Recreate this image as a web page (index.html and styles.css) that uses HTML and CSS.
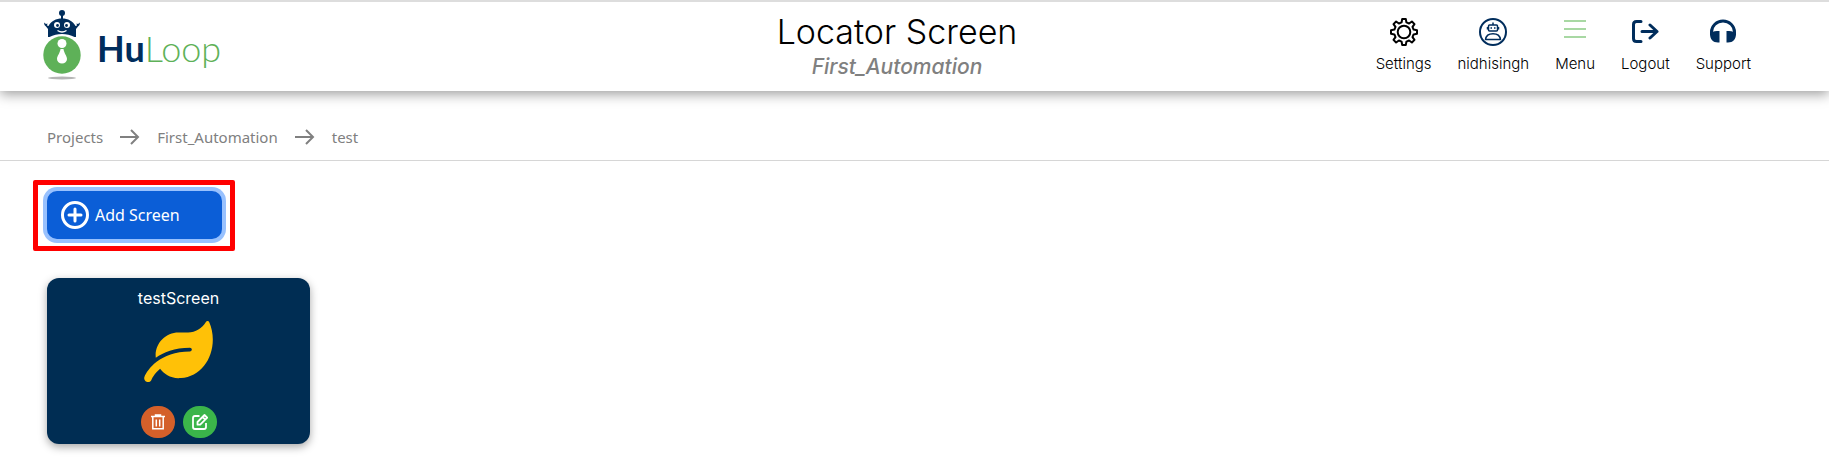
FILE: index.html
```html
<!DOCTYPE html>
<html lang="en">

<head>
    <meta charset="UTF-8">
    <meta name="viewport" content="width=device-width, initial-scale=1">
    <title>HuLoop</title>
    <link rel="stylesheet" href="styles.css">
</head>

<body>
    <header class="topbar">
        <a class="logo" href="#" aria-label="HuLoop">
            <svg class="logo-mark" viewBox="0 0 38 70" aria-hidden="true">
                <ellipse cx="19" cy="68" rx="14" ry="1.5" fill="#b5b5b5" />
                <g fill="#002d5c">
                    <circle cx="19" cy="3" r="3" />
                    <rect x="18" y="4" width="2" height="6" />
                    <path d="M5.500 16C8 11 13 8.500 19 8.500S30 11 32.500 16L34 15.500L33.500 13.500L35 14L37 12.500L36.500 15L35 16.500L33 19V27H31.500C24 23 14 23 6.500 27H5V19L3 16.500L1.500 15L1 12.500L3 14L4.500 13.500L4 15.500Z" />
                </g>
                <circle cx="14" cy="15" r="3" fill="#fff" />
                <circle cx="24" cy="15" r="3" fill="#fff" />
                <circle cx="14.5" cy="15.5" r="1.4" fill="#002d5c" />
                <circle cx="23.5" cy="15.5" r="1.4" fill="#002d5c" />
                <path d="M14.500 20.500Q19 23.500 23.500 20.500" fill="none" stroke="#fff" stroke-width="1.3" />
                <circle cx="19" cy="45" r="18.7" fill="#5eb158" />
                <circle cx="19" cy="33.5" r="4.5" fill="#fff" />
                <path d="M17.500 39H20.500C21 43 24 46 24 49A5 4.500 0 0 1 14 49C14 46 17 43 17.500 39Z" fill="#fff" />
            </svg>
            <span class="logo-text"><b>Hu</b>Loop</span>
        </a>

        <div class="heading">
            <h1>Locator Screen</h1>
            <p>First_Automation</p>
        </div>

        <nav class="actions">
            <a href="#">
                <svg viewBox="0 0 28 28" fill="none" stroke="#000" stroke-width="2" stroke-linejoin="round" aria-hidden="true">
                    <circle cx="14" cy="14" r="6.3" />
                    <path d="M12.200 1H15.800L16.400 4.400L19.100 5.500L21.900 3.500L24.500 6.100L22.500 8.900L23.600 11.600L27 12.200V15.800L23.600 16.400L22.500 19.100L24.500 21.900L21.900 24.500L19.100 22.500L16.400 23.600L15.800 27H12.200L11.600 23.600L8.900 22.500L6.100 24.500L3.500 21.900L5.500 19.100L4.400 16.400L1 15.800V12.200L4.400 11.600L5.500 8.900L3.500 6.100L6.100 3.500L8.900 5.500L11.600 4.400Z" />
                </svg>
                <span>Settings</span>
            </a>
            <a href="#">
                <svg viewBox="0 0 28 28" fill="none" stroke="#002d5c" stroke-width="1.5" aria-hidden="true">
                    <circle cx="14" cy="14" r="13" stroke-width="2" />
                    <rect x="9.5" y="7" width="9" height="6" rx="1" />
                    <path d="M14 7V4.500M8.500 9V11.500M19.500 9V11.500" />
                    <path d="M11.500 10H13M15 10H16.500" />
                    <path d="M6.500 21.500C7 17.500 10 15.700 14 15.700S21 17.500 21.500 21.500Z" stroke-linejoin="round" />
                </svg>
                <span>nidhisingh</span>
            </a>
            <a href="#">
                <svg viewBox="0 0 28 28" stroke="#a8d8a3" stroke-width="2" aria-hidden="true">
                    <path d="M3 3H25M3 11H25M3 19H25" />
                </svg>
                <span>Menu</span>
            </a>
            <a href="#">
                <svg viewBox="0 0 28 28" fill="none" stroke="#002d5c" stroke-width="3" stroke-linecap="round" stroke-linejoin="round" aria-hidden="true">
                    <path d="M10 3.500H5.500Q2.500 3.500 2.500 6.500V20.500Q2.500 23.500 5.500 23.500H10" />
                    <path d="M11 13.500H26M19 7L26 13.500L19 20" />
                </svg>
                <span>Logout</span>
            </a>
            <a href="#">
                <svg viewBox="0 0 28 28" aria-hidden="true">
                    <path d="M2.500 17V14A11.500 11 0 0 1 25.500 14V17" fill="none" stroke="#002d5c" stroke-width="3" />
                    <path d="M10.500 13V24.500H9C4 24.500 1 21 1 16Q3 13 8 13ZM17.500 13V24.500H19C24 24.500 27 21 27 16Q25 13 20 13Z" fill="#002d5c" />
                </svg>
                <span>Support</span>
            </a>
        </nav>
    </header>

    <nav class="breadcrumb" aria-label="Breadcrumb">
        <a href="#">Projects</a>
        <svg viewBox="0 0 20 16" aria-hidden="true"><path d="M0 8H18M11 1L18 8L11 15" /></svg>
        <a href="#">First_Automation</a>
        <svg viewBox="0 0 20 16" aria-hidden="true"><path d="M0 8H18M11 1L18 8L11 15" /></svg>
        <a href="#">test</a>
    </nav>

    <main>
        <div class="highlight">
            <button class="add-screen" type="button">
                <svg viewBox="0 0 28 28" aria-hidden="true">
                    <circle cx="14" cy="14" r="12.5" />
                    <path d="M14 8V20M8 14H20" />
                </svg>
                Add Screen
            </button>
        </div>

        <section class="card">
            <h2>testScreen</h2>
            <svg class="leaf" viewBox="0 0 576 512" aria-hidden="true">
                <path d="M546.2 9.700c-5.600-12.500-21.600-13-28.300-1.200C486.900 62.400 431.400 96 368 96h-80C182 96 96 182 96 288c0 7 .8 13.700 1.500 20.500C161.300 262.800 253.400 224 384 224c8.800 0 16 7.200 16 16s-7.200 16-16 16C132.600 256 26 410.100 2.400 468c-6.600 16.300 1.200 34.900 17.500 41.600 16.400 6.800 35-1.100 41.800-17.300 1.500-3.600 20.900-47.900 71.900-90.600 32.400 43.900 94 85.800 174.900 77.200C465.500 467.500 576 326.700 576 154.300c0-50.200-10.800-102.200-29.800-144.600z" />
            </svg>
            <div class="card-buttons">
                <button class="delete" type="button" aria-label="Delete">
                    <svg viewBox="0 0 16 16" stroke-width="1.5" aria-hidden="true">
                        <path d="M1 2.500H15M5.500 2V1H10.500V2M2.800 3V14.800H13.200V3M6.300 5.500V12.500M9.700 5.500V12.500" />
                    </svg>
                </button>
                <button class="edit" type="button" aria-label="Edit">
                    <svg viewBox="0 0 16 16" stroke-width="1.8" stroke-linejoin="round" aria-hidden="true">
                        <path d="M7.500 2H3Q1 2 1 4V13Q1 15 3 15H12Q14 15 14 13V9M5.500 10.700V8L12.500 1L15.200 3.700L8.200 10.700ZM10.500 3L13.200 5.700" />
                    </svg>
                </button>
            </div>
        </section>
    </main>
</body>

</html>
```

FILE: styles.css
```css
* {
    box-sizing: border-box;
}

body {
    margin: 0;
    background: #fff;
    font-family: "Noto Sans", sans-serif;
    font-size: 16px;
}

a {
    color: inherit;
    text-decoration: none;
}

svg {
    display: block;
}

/* header */
.topbar {
    display: grid;
    grid-template-columns: 1fr auto 1fr;
    align-items: start;
    padding: 8px 78px 9px 43px;
    border-top: 2px solid #ddd;
    box-shadow: 0 3px 12px rgba(0, 0, 0, 0.4);
    font-family: Inter, sans-serif;
}

.logo {
    display: flex;
    align-items: center;
    gap: 16px;
}

.logo-mark {
    width: 38px;
    height: 70px;
}

.logo-text {
    padding-top: 6px;
    font-family: Lato, sans-serif;
    font-size: 36px;
    font-weight: 300;
    line-height: 40px;
    color: #5eb158;
}

.logo-text b {
    font-weight: 700;
    color: #002d5c;
}

.heading {
    text-align: center;
}

.heading h1 {
    margin: 0;
    padding-top: 2px;
    font-size: 34px;
    font-weight: 300;
    line-height: 40px;
}

.heading p {
    margin: 0;
    font-size: 21px;
    font-style: italic;
    font-weight: 500;
    line-height: 30px;
    color: #808080;
}

.actions {
    display: flex;
    justify-content: flex-end;
    gap: 26px;
    padding-top: 8px;
    font-size: 15px;
    font-weight: 300;
    line-height: 20px;
}

.actions a {
    display: flex;
    flex-direction: column;
    align-items: center;
    gap: 8px;
}

.actions svg {
    width: 28px;
    height: 28px;
}

/* breadcrumb */
.breadcrumb {
    display: flex;
    align-items: center;
    gap: 17px;
    padding: 34px 47px 11px;
    border-bottom: 1px solid #d6d6d6;
    font-size: 15px;
    line-height: 24px;
    color: #808080;
}

.breadcrumb svg {
    width: 20px;
    height: 16px;
    fill: none;
    stroke: #808080;
    stroke-width: 2;
}

main {
    padding: 19px 33px;
}

.highlight {
    width: fit-content;
    padding: 6px 8px 7px 9px;
    border: 5px solid #f00;
    border-radius: 2px;
}

.add-screen {
    display: flex;
    align-items: center;
    gap: 6px;
    width: 175px;
    height: 48px;
    padding: 0 14px;
    border: 0;
    border-radius: 10px;
    background: #0b5ed7;
    box-shadow: 0 0 0 4px #98c1fe;
    font: inherit;
    color: #fff;
}

.add-screen svg {
    width: 28px;
    height: 28px;
    fill: none;
    stroke: #fff;
    stroke-width: 3;
    stroke-linecap: round;
}

/* screen card */
.card {
    display: flex;
    flex-direction: column;
    align-items: center;
    width: 263px;
    margin: 27px 14px 0;
    padding: 8px 8px 6px;
    border-radius: 12px;
    background: #002d53;
    box-shadow: 0 3px 8px rgba(0, 0, 0, 0.35);
    color: #fff;
}

.card h2 {
    margin: 0;
    font-family: Inter, sans-serif;
    font-size: 16px;
    font-weight: 400;
    line-height: 24px;
}

.leaf {
    width: 69px;
    height: 61px;
    margin: 11px 0 24px;
    fill: #ffc107;
}

.card-buttons {
    display: flex;
    gap: 8px;
}

.card-buttons button {
    display: grid;
    place-items: center;
    width: 34px;
    height: 32px;
    padding: 0;
    border: 0;
    border-radius: 16px;
}

.card-buttons svg {
    width: 16px;
    height: 16px;
    fill: none;
    stroke: #fff;
}

.delete {
    background: #d4602a;
}

.edit {
    background: #3bb54a;
}
```
